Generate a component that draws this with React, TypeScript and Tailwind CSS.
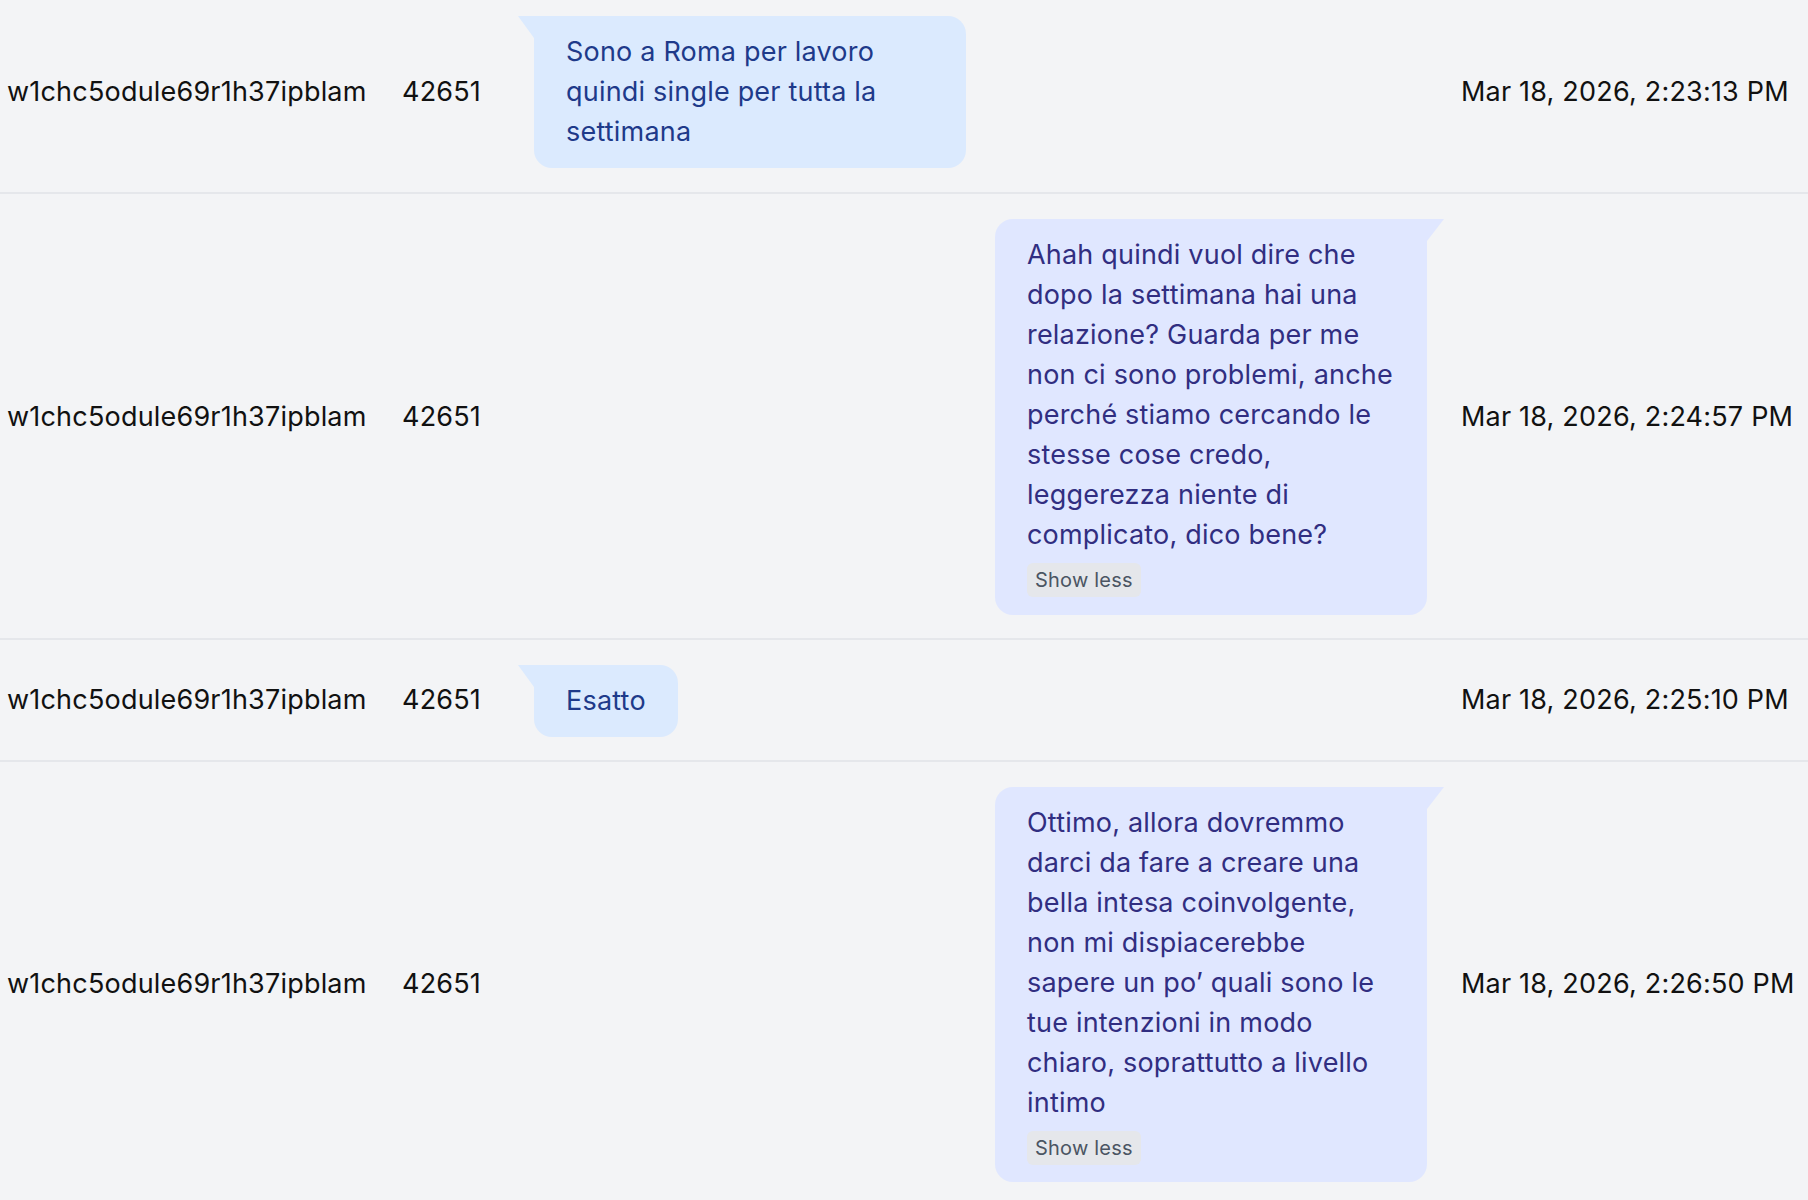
import React from 'react';

type Msg = {
  id: string;
  user: string;
  text: string;
  outgoing: boolean;
  time: string;
  long?: boolean;
};

const messages: Msg[] = [
  {
    id: 'm1',
    user: 'w1chc5odule69r1h37ipblam',
    text: 'Sono a Roma per lavoro quindi single per tutta la settimana',
    outgoing: false,
    time: 'Mar 18, 2026, 2:23:13 PM',
  },
  {
    id: 'm2',
    user: 'w1chc5odule69r1h37ipblam',
    text: 'Ahah quindi vuol dire che dopo la settimana hai una relazione? Guarda per me non ci sono problemi, anche perché stiamo cercando le stesse cose credo, leggerezza niente di complicato, dico bene?',
    outgoing: true,
    time: 'Mar 18, 2026, 2:24:57 PM',
    long: true,
  },
  {
    id: 'm3',
    user: 'w1chc5odule69r1h37ipblam',
    text: 'Esatto',
    outgoing: false,
    time: 'Mar 18, 2026, 2:25:10 PM',
  },
  {
    id: 'm4',
    user: 'w1chc5odule69r1h37ipblam',
    text: 'Ottimo, allora dovremmo darci da fare a creare una bella intesa coinvolgente, non mi dispiacerebbe sapere un po\u2019 quali sono le tue intenzioni in modo chiaro, soprattutto a livello intimo',
    outgoing: true,
    time: 'Mar 18, 2026, 2:26:50 PM',
    long: true,
  },
];

function Bubble({ msg }: { msg: Msg }) {
  if (msg.outgoing) {
    return (
      <div className="flex justify-end pr-[17px]">
        <div className="relative w-max max-w-[432px] rounded-[18px] rounded-tr-none bg-[#e0e7ff] px-8 py-4 text-[#312e81]">
          <svg
            className="absolute top-0 -right-[17px]"
            width="17"
            height="22"
            viewBox="0 0 17 22"
          >
            <polygon points="0,0 17,0 0,22" fill="#e0e7ff" />
          </svg>
          <p className="leading-[40px]">{msg.text}</p>
          {msg.long && (
            <button className="mt-2 rounded-md bg-[#e5e7eb] px-2 h-[34px] text-[20px] leading-[34px] tracking-[0.2px] text-[#4b5563]">
              Show less
            </button>
          )}
        </div>
      </div>
    );
  }
  return (
    <div className="flex justify-start pl-4">
      <div className="relative w-max max-w-[432px] rounded-[18px] rounded-tl-none bg-[#dbeafe] px-8 py-4 text-[#1e3a8a]">
        <svg
          className="absolute top-0 -left-4"
          width="16"
          height="22"
          viewBox="0 0 16 22"
        >
          <polygon points="0,0 16,0 16,22" fill="#dbeafe" />
        </svg>
        <p className="leading-[40px]">{msg.text}</p>
      </div>
    </div>
  );
}

export default function App() {
  return (
    <div className="h-[1200px] overflow-hidden bg-[#f3f4f6] font-['Inter',sans-serif] text-[27px] tracking-[0.2px] text-[#111111]">
      {messages.map((msg, i) => (
        <div
          key={msg.id}
          className={`grid grid-cols-[395px_116px_943px_1fr] items-center border-b-2 border-[#e5e7eb] ${
            i === 0 ? 'pt-4 pb-6' : 'pt-[25px] pb-[23px]'
          }`}
        >
          <div className="pl-[7px] whitespace-nowrap">{msg.user}</div>
          <div className="pl-[7px]">42651</div>
          <div className="pl-[7px] pr-[10px]">
            <Bubble msg={msg} />
          </div>
          <div className="pl-[7px] whitespace-nowrap">{msg.time}</div>
        </div>
      ))}
    </div>
  );
}
